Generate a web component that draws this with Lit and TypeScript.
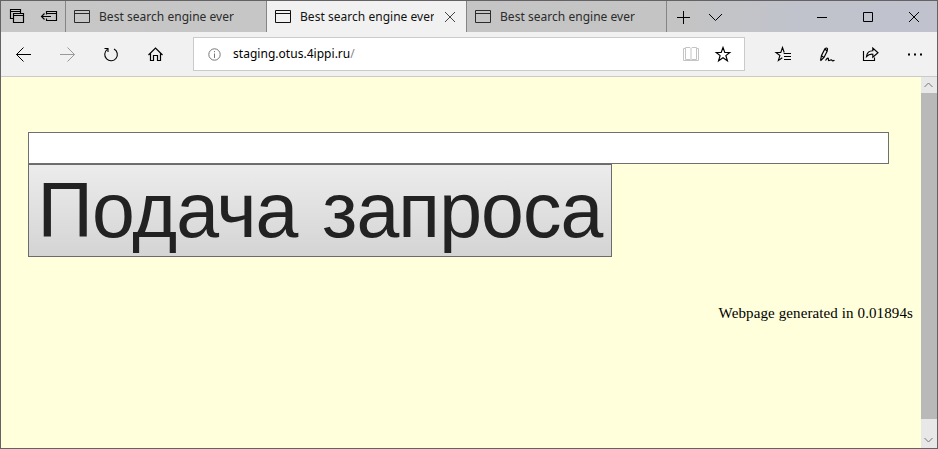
import { LitElement, html, css, svg } from "lit";
import { customElement } from "lit/decorators.js";

const icons = {
  stack: svg`<path d="M5.5 10.5H2.5V1.5H12.5V5.5M2.5 3.5H12.5M5.5 14.5V5.5H15.5V14.5ZM5.5 7.5H15.5" stroke-width="1.15" />`,
  aside: svg`<path d="M6.5 6.5V3.5H16.5V12.5H6.5V10.5M6.5 5.5H16.5M1.5 8.5H11M4.5 5.5L1.5 8.5L4.5 11.5" stroke-width="1.15" />`,
  page: svg`<path d="M1.5 2.5H16.5V14.5H1.5ZM1.5 5.5H16.5" />`,
  close: svg`<path d="M4 4L14 14M14 4L4 14" />`,
  plus: svg`<path d="M9.5 3V16M3 9.5H16" />`,
  down: svg`<path d="M3 6L9.5 12.5L16 6" />`,
  min: svg`<path d="M4 9.5H14" />`,
  max: svg`<path d="M4.5 4.5H13.5V13.5H4.5Z" />`,
  back: svg`<path d="M1.5 9.5H16M8.5 2.5L1.5 9.5L8.5 16.5" />`,
  forward: svg`<path d="M1 9.5H15.5M8.5 2.5L15.5 9.5L8.5 16.5" />`,
  refresh: svg`<path d="M4.3 4.4A6.3 6.3 0 1 0 11 3.9M1.5 3.5H5V7" stroke-width="1.1" />`,
  home: svg`<path d="M1.5 10L8.5 3L15.5 10M3.5 8.5V15.5H6.5V10.5H10.5V15.5H13.5V8.5" stroke-width="1.2" />`,
  info: svg`<circle cx="9.5" cy="9.5" r="5.7" /><path d="M9.5 8.5V13M9.5 6V7.2" />`,
  book: svg`<path d="M3.5 3.5H1.5V15.5H16.5V3.5H14.5M3.5 2.5H8L9 3.5L10 2.5H14.5V14.5H10L9 15.5L8 14.5H3.5ZM9 3.5V15.5" />`,
  star: svg`<path d="M9 2.5L10.8 7.5H15.7L11.9 10.6L13.4 15.7L9 12.7L4.6 15.7L6.1 10.6L2.3 7.5H7.2Z" stroke-width="1.2" />`,
  favs: svg`<path d="M10.2 7.5L8.5 2.5L6.8 7.5H2L5.9 10.5L4.4 15.4L8.3 12.8M9.7 8.5H17M10 11.5H17M10 14.5H17" stroke-width="1.1" />`,
  pen: svg`<path d="M2.5 15.7L3.5 10.5L7 3.7Q8.6 2.2 9.5 3.9L9.1 6.3L6 12.4L2.5 15.7M3.5 10.8L5.6 12.2M7 4L9 6.2M7.5 15.5C9.5 12.5 10.7 12.6 10.4 14.8C10.2 17 13 13.8 14 15.3Q14.5 16.3 16.5 15.3" stroke-width="1.2" />`,
  share: svg`<path d="M1.5 6V15.5H12.5V12.5M4.5 11.5C5 7.6 7.5 5.7 10.8 5.7V3L16 7.7L10.8 12.2V9.2C8.2 9 6.2 9.7 4.5 11.5Z" stroke-width="1.15" />`,
  dots: svg`<path d="M2 9.5H4M8 9.5H10M14 9.5H16" stroke-width="2" />`,
  scrollUp: svg`<path d="M4.5 11L8.5 7L12.5 11" />`,
  scrollDown: svg`<path d="M4.5 7L8.5 11L12.5 7" />`,
};

const icon = (name: keyof typeof icons) =>
  html`<svg class="icon" width="18" height="18" viewBox="0 0 18 18" aria-hidden="true">${icons[name]}</svg>`;

@customElement("app-root")
export class AppRoot extends LitElement {
  static styles = css`
    :host {
      display: block;
    }
    * {
      box-sizing: border-box;
    }
    .window {
      display: flex;
      flex-direction: column;
      height: 449px;
      border: 1px solid #646265;
      background: #f1f1f1;
      color: #000;
      font-family: "Noto Sans", "Open Sans", sans-serif;
      font-size: 12px;
    }
    .icon {
      flex: none;
      display: block;
      fill: none;
      stroke: currentColor;
      stroke-width: 1;
      overflow: visible;
    }
    .titlebar {
      display: flex;
      flex: none;
      height: 31px;
      background: linear-gradient(90deg, #c7c7c7 0, #c4c4c4 680px, #c0c3cc 800px, #c0c3cd 100%);
    }
    .tools {
      display: flex;
      align-items: center;
      gap: 14px;
      width: 65px;
      padding: 1px 0 0 7px;
      border-right: 1px solid #858585;
    }
    .tab {
      display: flex;
      align-items: center;
      width: 200px;
      padding-left: 7px;
      border-right: 1px solid #858585;
      color: #2b2b2b;
    }
    .tab:nth-child(2) {
      width: 201px;
    }
    .tab .icon {
      margin-right: 8px;
    }
    .active {
      background: #f1f1f1;
      color: #111;
    }
    .label {
      flex: none;
      overflow: hidden;
      white-space: nowrap;
      line-height: 18px;
      letter-spacing: 0.03px;
    }
    .active .label {
      width: 134px;
    }
    .active .icon:last-child {
      margin: 0 0 0 7px;
      color: #444;
    }
    .strip {
      display: flex;
      align-items: center;
      gap: 14px;
      padding-left: 7px;
    }
    .controls {
      display: flex;
      margin-left: auto;
    }
    .button {
      display: flex;
      flex: none;
      align-items: center;
      justify-content: center;
      width: 46px;
    }
    .toolbar {
      display: flex;
      flex: none;
      height: 45px;
      padding-left: 1px;
      border-bottom: 1px solid #cacaca;
    }
    .toolbar .button {
      width: 44px;
    }
    .toolbar .disabled {
      color: #999;
    }
    .address {
      display: flex;
      flex: none;
      align-items: center;
      width: 552px;
      height: 34px;
      margin: 5px 16px 0 15px;
      padding: 0 12px 0 11px;
      border: 1px solid #cacaca;
      background: #fff;
    }
    .info {
      margin-right: 10px;
      color: #777;
    }
    .muted {
      color: #888;
    }
    .book {
      margin: 0 14px 0 auto;
      color: #c4c4c4;
    }
    .body {
      display: flex;
      flex: 1;
      min-height: 0;
    }
    .page {
      flex: 1;
      padding: 55px 8px 0 27px;
      background: #ffffdb;
      font-family: "Liberation Serif", serif;
    }
    .query {
      display: block;
      width: 861px;
      height: 32px;
      padding: 0 4px;
      border: 1px solid #707070;
      border-radius: 0;
      background: #fff;
      outline: none;
    }
    .submit {
      display: block;
      width: 584px;
      height: 93px;
      padding: 0;
      border: 1px solid #6c6a6e;
      border-radius: 0;
      background: linear-gradient(#ececec, #d4d4d4);
      color: #222;
      font: 77px/91px "Liberation Sans", sans-serif;
      letter-spacing: -0.9px;
      word-spacing: 4px;
      white-space: nowrap;
    }
    .footer {
      margin: 48px 0 0;
      text-align: right;
      font-size: 15px;
      line-height: 17px;
      letter-spacing: 0.11px;
    }
    .scrollbar {
      display: flex;
      flex-direction: column;
      justify-content: space-between;
      width: 16px;
      background: #e8e8e8;
      color: #777;
    }
    .thumb {
      height: 326px;
      margin-bottom: auto;
      background: #b9b9b9;
    }
    .arrow {
      display: flex;
      justify-content: center;
      align-items: center;
      height: 16px;
    }
  `;

  render() {
    const title = "Best search engine ever";
    return html`
      <div class="window">
        <div class="titlebar">
          <div class="tools">${icon("stack")}${icon("aside")}</div>
          <div class="tab">${icon("page")}<span class="label">${title}</span></div>
          <div class="tab active">${icon("page")}<span class="label">${title}</span>${icon("close")}</div>
          <div class="tab">${icon("page")}<span class="label">${title}</span></div>
          <div class="strip">${icon("plus")}${icon("down")}</div>
          <div class="controls">
            ${(["min", "max", "close"] as const).map((n) => html`<span class="button">${icon(n)}</span>`)}
          </div>
        </div>
        <div class="toolbar">
          <span class="button">${icon("back")}</span>
          <span class="button disabled">${icon("forward")}</span>
          <span class="button">${icon("refresh")}</span>
          <span class="button">${icon("home")}</span>
          <div class="address">
            <span class="info">${icon("info")}</span>
            <span class="label">staging.otus.4ippi.ru<span class="muted">/</span></span>
            <span class="book">${icon("book")}</span>
            ${icon("star")}
          </div>
          ${(["favs", "pen", "share", "dots"] as const).map((n) => html`<span class="button">${icon(n)}</span>`)}
        </div>
        <div class="body">
          <div class="page">
            <input class="query" type="text" />
            <button class="submit">Подача запроса</button>
            <p class="footer">Webpage generated in 0.01894s</p>
          </div>
          <div class="scrollbar">
            <span class="arrow">${icon("scrollUp")}</span>
            <div class="thumb"></div>
            <span class="arrow">${icon("scrollDown")}</span>
          </div>
        </div>
      </div>
    `;
  }
}
